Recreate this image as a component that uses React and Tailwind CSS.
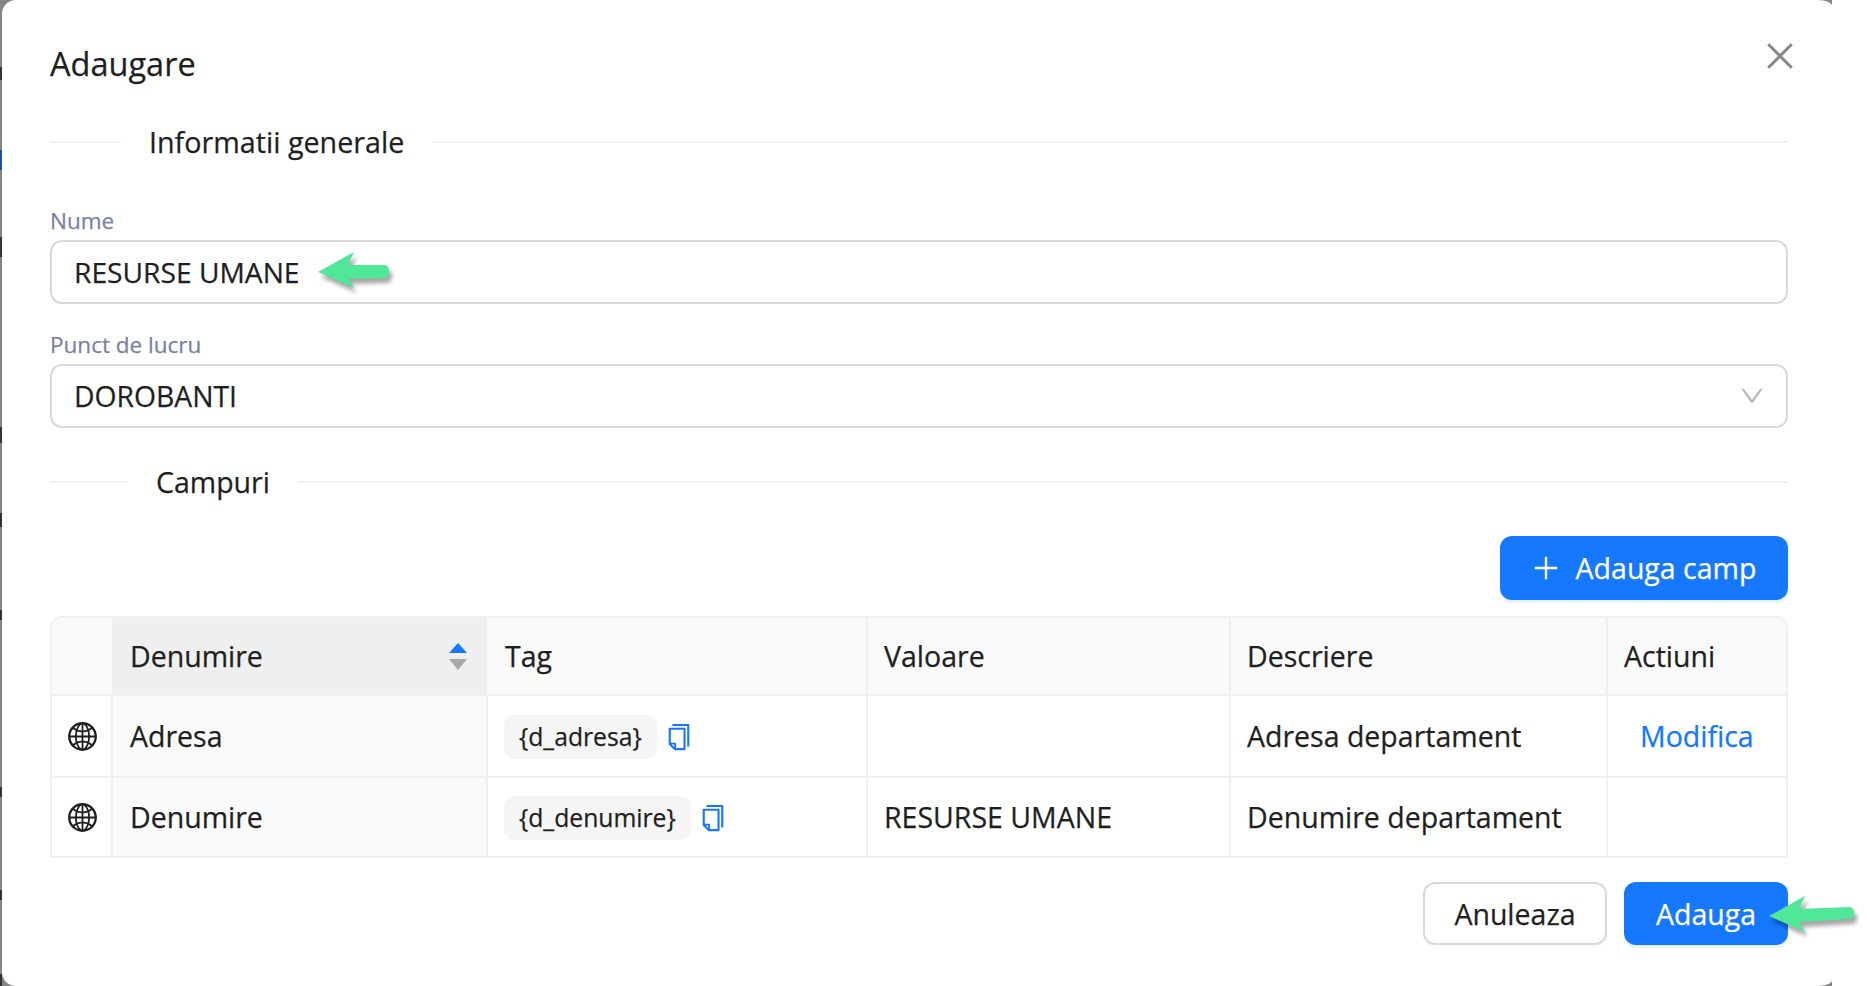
import { AiOutlineClose, AiOutlineCopy, AiOutlineDown, AiOutlineGlobal, AiOutlinePlus } from "react-icons/ai";

const rows = [
  { name: "Adresa", tag: "{d_adresa}", value: "", desc: "Adresa departament", action: "Modifica", height: "h-[82px]" },
  { name: "Denumire", tag: "{d_denumire}", value: "RESURSE UMANE", desc: "Denumire departament", action: "", height: "h-[79px]" },
];

// bits of the page behind the modal, showing at its left edge
const behind = [
  "top-[67px] h-[13px] bg-[#333333]",
  "top-[150px] h-[20px] bg-[#1f4f9e]",
  "top-[237px] h-[20px] bg-[#333333]",
  "top-[427px] h-[16px] bg-[#333333]",
  "top-[513px] h-[14px] bg-[#333333]",
  "top-[610px] h-[10px] bg-[#333333]",
  "top-[787px] h-[10px] bg-[#333333]",
  "top-[890px] h-[10px] bg-[#333333]",
  "top-[974px] h-[12px] bg-[#333333]",
];

function SectionTitle({ left, children, size }) {
  return (
    <div className="flex h-10 items-center">
      <div className={`h-[2px] bg-[#f0f0f0] ${left}`} />
      <div className={`px-[28px] ${size}`}>{children}</div>
      <div className="h-[2px] flex-1 bg-[#f0f0f0]" />
    </div>
  );
}

function GreenArrow({ className, long }) {
  const shaft = long
    ? "M2 21 L38 1 L32 14 L82 12 Q87 12 87 18 Q87 24 82 24 L32 27 L38 37 Z"
    : "M2 21 L38 1 L32 14 L68 14 Q73 14 73 20.5 Q73 27 68 27 L32 28 L38 37 Z";
  return (
    <svg className={className} width="100" height="56" viewBox="0 0 100 56">
      <path d={shaft} fill="#000" opacity="0.35" transform="translate(3 5)" style={{ filter: "blur(2px)" }} />
      <path d={shaft} fill="#50e898" />
    </svg>
  );
}

export default function App() {
  return (
    <div className="flex h-screen w-full overflow-hidden bg-white font-['Open_Sans',sans-serif] text-[28.5px] text-[#1f1f1f] [-webkit-text-stroke:0.25px]">
      <div className="relative h-full w-[1832px] bg-[#858585] pl-[2px]">
        {behind.map((b) => (
          <div key={b} className={`absolute left-0 w-[2px] ${b}`} />
        ))}
        <div className="relative h-full rounded-l-[14px] rounded-tr-[14px_6px] rounded-br-[14px_6px] bg-white pl-[48px] pr-[44px] pt-[42px]">
          <h1 className="text-[32.5px] font-normal leading-[44px]">Adaugare</h1>
          <AiOutlineClose className="absolute right-[33px] top-[37px] text-[#8a8a8a]" size={38} />

          <div className="mt-9">
            <SectionTitle left="w-[71px]" size="text-[28.7px]">Informatii generale</SectionTitle>
          </div>

          <label className="mt-[43px] block text-[22.5px] leading-8 text-[#7a82a3]">Nume</label>
          <div className="relative mt-[3px] flex h-16 items-center rounded-xl border-2 border-[#d9d9d9] px-[22px] text-[28.2px]">
            RESURSE UMANE
            <GreenArrow className="absolute left-[264px] top-[9px]" />
          </div>

          <label className="mt-[25px] block text-[22.5px] leading-8 text-[#7a82a3]">Punct de lucru</label>
          <div className="mt-[3px] flex h-16 items-center justify-between rounded-xl border-2 border-[#d9d9d9] pl-[22px] pr-5 text-[28.3px]">
            DOROBANTI
            <AiOutlineDown className="text-[#b5b5b5]" size={28} />
          </div>

          <div className="mt-[34px]">
            <SectionTitle left="w-[78px]" size="text-[28.5px]">Campuri</SectionTitle>
          </div>

          <div className="mt-[34px] flex justify-end">
            <button className="flex h-16 w-[288px] items-center justify-center gap-[14px] rounded-xl bg-[#1677ff] pr-[2px] text-white shadow-[0_3px_0_rgba(5,145,255,0.1)]">
              <AiOutlinePlus size={32} />
              Adauga camp
            </button>
          </div>

          {/* Table */}
          <div className="mt-4 overflow-hidden rounded-t-xl border-2 border-[#f0f0f0]">
            <table className="w-full table-fixed border-collapse text-left">
              <colgroup>
                <col className="w-[60px]" />
                <col className="w-[375px]" />
                <col className="w-[380px]" />
                <col className="w-[363px]" />
                <col className="w-[377px]" />
                <col />
              </colgroup>
              <thead>
                <tr className="h-[77px] border-b-2 border-[#f0f0f0] bg-[#fafafa]">
                  <th className="p-0" />
                  <th className="bg-[#efefef] pl-[18px] pr-[20px] pt-px font-normal">
                    <div className="flex items-center justify-between">
                      Denumire
                      <svg width="18" height="27" viewBox="0 0 18 27">
                        <path d="M9 0 L18 10 H0 Z" fill="#1677ff" />
                        <path d="M0 16 H18 L9 27 Z" fill="#a8a8a8" />
                      </svg>
                    </div>
                  </th>
                  <th className="pl-[18px] pr-4 pt-px font-normal">Tag</th>
                  <th className="border-l-2 border-[#f0f0f0] px-4 pt-px font-normal">Valoare</th>
                  <th className="border-l-2 border-[#f0f0f0] px-4 pt-px font-normal">Descriere</th>
                  <th className="border-l-2 border-[#f0f0f0] px-4 pt-px font-normal">Actiuni</th>
                </tr>
              </thead>
              <tbody>
                {rows.map((r) => (
                  <tr key={r.name} className="border-b-2 border-[#f0f0f0] last:border-b-0">
                    <td className={`${r.height} p-0 pl-px pt-px`}>
                      <AiOutlineGlobal className="mx-auto" size={33} />
                    </td>
                    <td className="border-l-2 border-[#f0f0f0] bg-[#fafafa] pl-[17px] pr-4">{r.name}</td>
                    <td className="border-l-2 border-[#f0f0f0] px-4">
                      <div className="flex items-center gap-[7px] pt-px">
                        <span className="flex h-11 items-center rounded-[10px] bg-[#f5f5f5] px-[15px] text-[24.7px]">{r.tag}</span>
                        <AiOutlineCopy className="text-[#1677ff]" size={30} />
                      </div>
                    </td>
                    <td className="border-l-2 border-[#f0f0f0] px-4">{r.value}</td>
                    <td className="border-l-2 border-[#f0f0f0] px-4">{r.desc}</td>
                    <td className="border-l-2 border-[#f0f0f0] px-4">
                      {r.action && <a className="pl-4 text-[#1677ff]">{r.action}</a>}
                    </td>
                  </tr>
                ))}
              </tbody>
            </table>
          </div>

          {/* Footer */}
          <div className="relative mt-6 flex justify-end gap-[17px]">
            <button className="h-[63px] w-[184px] rounded-xl border-2 border-[#d9d9d9] bg-white pt-px shadow-[0_3px_0_rgba(0,0,0,0.02)]">Anuleaza</button>
            <button className="h-[63px] w-[164px] rounded-xl bg-[#1677ff] pt-px text-white shadow-[0_3px_0_rgba(5,145,255,0.1)]">Adauga</button>
            <GreenArrow long className="absolute right-[-79px] top-[13px]" />
          </div>
        </div>
      </div>
    </div>
  );
}
